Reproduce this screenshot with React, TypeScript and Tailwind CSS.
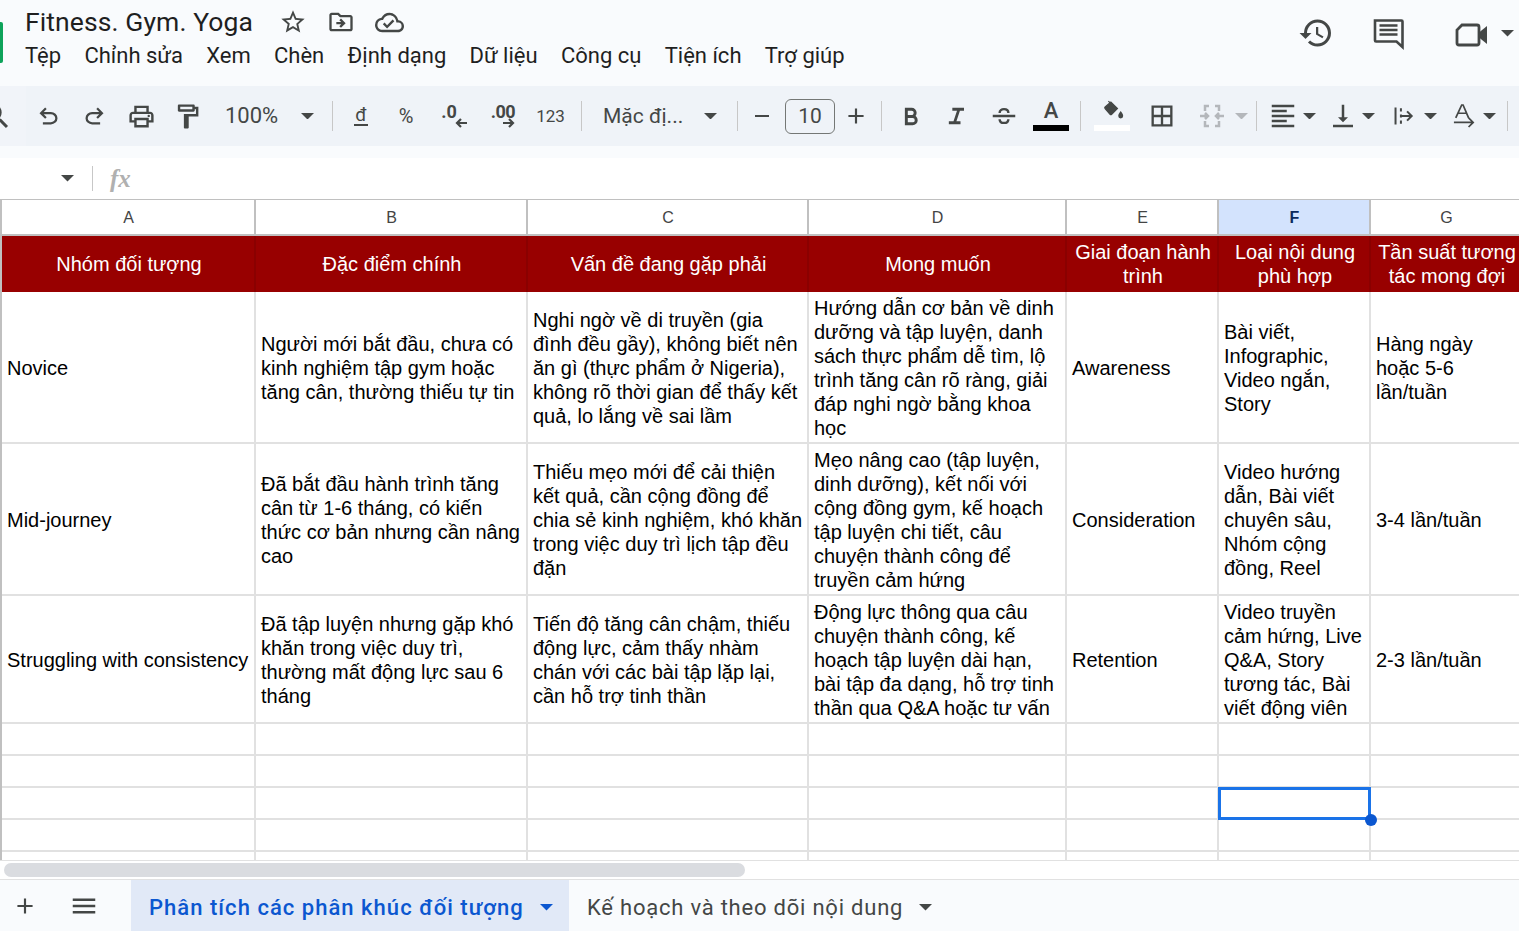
import React from "react";
import {
  MdOutlinePrint, MdOutlineFormatPaint, MdStarBorder, MdOutlineDriveFileMove, MdOutlineCloudDone,
  MdHistory, MdBorderAll, MdFormatAlignLeft,
  MdVerticalAlignBottom, MdSearch, MdAdd, MdRemove, MdMenu,
} from "react-icons/md";

const ic = "#444746";

function Caret({ w = 13, color = "#444746" }: { w?: number; color?: string }) {
  return (
    <svg width={w} height={w / 2} viewBox="0 0 14 7" className="shrink-0"><path d="M0 0h14L7 7z" fill={color} /></svg>
  );
}
function Slot({ w, ml = 0, children }: { w: number; ml?: number; children?: React.ReactNode }) {
  return <div className="flex shrink-0 items-center justify-center" style={{ width: w, marginLeft: ml }}>{children}</div>;
}
function Sep({ ml = 0 }: { ml?: number }) {
  return <div className="h-[30px] w-px shrink-0 bg-[#c7c7c7]" style={{ marginLeft: ml }} />;
}

const menus = ["Tệp", "Chỉnh sửa", "Xem", "Chèn", "Định dạng", "Dữ liệu", "Công cụ", "Tiện ích", "Trợ giúp"];

const cols = ["A", "B", "C", "D", "E", "F", "G"];
const head = ["Nhóm đối tượng", "Đặc điểm chính", "Vấn đề đang gặp phải", "Mong muốn", "Giai đoạn hành\ntrình", "Loại nội dung\nphù hợp", "Tần suất tương\ntác mong đợi"];
const rows = [
  { h: "h-[152px]", c: ["Novice", "Người mới bắt đầu, chưa có\nkinh nghiệm tập gym hoặc\ntăng cân, thường thiếu tự tin", "Nghi ngờ về di truyền (gia\nđình đều gầy), không biết nên\năn gì (thực phẩm ở Nigeria),\nkhông rõ thời gian để thấy kết\nquả, lo lắng về sai lầm", "Hướng dẫn cơ bản về dinh\ndưỡng và tập luyện, danh\nsách thực phẩm dễ tìm, lộ\ntrình tăng cân rõ ràng, giải\nđáp nghi ngờ bằng khoa\nhọc", "Awareness", "Bài viết,\nInfographic,\nVideo ngắn,\nStory", "Hàng ngày\nhoặc 5-6\nlần/tuần"] },
  { h: "h-[152px]", c: ["Mid-journey", "Đã bắt đầu hành trình tăng\ncân từ 1-6 tháng, có kiến\nthức cơ bản nhưng cần nâng\ncao", "Thiếu mẹo mới để cải thiện\nkết quả, cần cộng đồng để\nchia sẻ kinh nghiệm, khó khăn\ntrong việc duy trì lịch tập đều\nđặn", "Mẹo nâng cao (tập luyện,\ndinh dưỡng), kết nối với\ncộng đồng gym, kế hoạch\ntập luyện chi tiết, câu\nchuyện thành công để\ntruyền cảm hứng", "Consideration", "Video hướng\ndẫn, Bài viết\nchuyên sâu,\nNhóm cộng\nđồng, Reel", "3-4 lần/tuần"] },
  { h: "h-[128px]", c: ["Struggling with consistency", "Đã tập luyện nhưng gặp khó\nkhăn trong việc duy trì,\nthường mất động lực sau 6\ntháng", "Tiến độ tăng cân chậm, thiếu\nđộng lực, cảm thấy nhàm\nchán với các bài tập lặp lại,\ncần hỗ trợ tinh thần", "Động lực thông qua câu\nchuyện thành công, kế\nhoạch tập luyện dài hạn,\nbài tập đa dạng, hỗ trợ tinh\nthần qua Q&A hoặc tư vấn", "Retention", "Video truyền\ncảm hứng, Live\nQ&A, Story\ntương tác, Bài\nviết động viên", "2-3 lần/tuần"] },
];
const gridCols = "grid grid-cols-[254px_272px_281px_258px_152px_152px_152px] w-[1521px]";

export default function App() {
  return (
    <div className="relative flex h-[931px] w-[1519px] flex-col overflow-hidden bg-white font-['Liberation_Sans',sans-serif]">
      {/* Title + menu */}
      <div className="flex h-[86px] shrink-0 bg-[#f9fbfd]">
        <div className="mt-[22px] h-[41px] w-[3px] shrink-0 rounded-r-[2px] bg-[#0ea35a]" />
        <div className="ml-[22px] flex-1 font-['Roboto',sans-serif]">
          <div className="mt-[4px] flex h-[36px] items-center">
            <span className="text-[26.500px] leading-[34px] tracking-[0.1px] text-[#1f1f1f]">Fitness. Gym. Yoga</span>
            <MdStarBorder size={28} color={ic} className="ml-[26px]" />
            <MdOutlineDriveFileMove size={28} color={ic} className="ml-[20px]" />
            <MdOutlineCloudDone size={29} color={ic} className="ml-[20px]" />
          </div>
          <div className="mt-[2px] flex gap-[23.3px] text-[22px] leading-[28px] text-[#1f1f1f]">
            {menus.map((m) => <span key={m} className="whitespace-nowrap">{m}</span>)}
          </div>
        </div>
        <div className="flex items-start pt-[15px] pr-[5px]">
          <MdHistory size={36} color={ic} />
          <svg width="36" height="36" viewBox="0 0 36 36" className="ml-[37px]"><path d="M4 5.500h26.500a1 1 0 0 1 1 1V32l-6-5.500H5a1 1 0 0 1-1-1z" fill="none" stroke={ic} strokeWidth="2.600" /><path d="M8.500 10.500h18M8.500 15h18M8.500 19.500h18" stroke={ic} strokeWidth="2.600" /></svg>
          <svg width="34" height="26" viewBox="0 0 34 26" className="ml-[48px] mt-[7px]"><path d="M7 3h15a2 2 0 0 1 2 2v16a2 2 0 0 1-2 2H4a2 2 0 0 1-2-2V8z" fill="none" stroke={ic} strokeWidth="2.800" /><path d="M24 10.500 32 4v18l-8-6.500z" fill={ic} /></svg>
          <div className="ml-[12px] mt-[15px]"><Caret /></div>
        </div>
      </div>

      {/* Toolbar */}
      <div className="flex h-[60px] shrink-0 items-center bg-[#eff3f8] font-['Roboto',sans-serif] text-[#444746]">
        <div className="flex h-full w-[26px] shrink-0 items-center overflow-hidden bg-[#f1f4f9]"><MdSearch size={34} color={ic} className="-ml-[21px] shrink-0" /></div>
        <Slot w={44}><svg width="27" height="27" viewBox="0 0 24 24" fill={ic}><path d="M7 19v-2h7.100q1.575 0 2.738-1T18 13.500T16.838 11T14.100 10H7.800l2.600 2.600L9 14 4 9l5-5 1.400 1.400L7.800 8h6.300q2.425 0 4.163 1.575T20 13.500t-1.737 3.925T14.100 19z" /></svg></Slot>
        <Slot w={49}><svg width="27" height="27" viewBox="0 0 24 24" fill={ic}><path d="M9.900 19q-2.425 0-4.163-1.575T4 13.500t1.737-3.925T9.900 8h6.300l-2.600-2.600L15 4l5 5-5 5-1.400-1.400 2.600-2.600H9.900q-1.575 0-2.738 1T6 13.500T7.163 16T9.900 17H17v2z" /></svg></Slot>
        <Slot w={45}><MdOutlinePrint size={29} color={ic} /></Slot>
        <Slot w={47}><MdOutlineFormatPaint size={29} color={ic} /></Slot>
        <span className="ml-[14px] w-[69px] text-[22px] leading-none">100%</span>
        <Slot w={26}><Caret /></Slot>
        <Sep ml={12} />
        <Slot w={56}><span className="border-b-[2px] border-[#444746] px-px text-[19px] leading-[18px]">đ</span></Slot>
        <Slot w={34}><span className="text-[20px] leading-none">%</span></Slot>
        <Slot w={62}>
          <span className="flex items-start">
            <span className="text-[18px] font-bold leading-none">.0</span>
            <svg width="12" height="12" viewBox="0 0 12 12" className="-ml-[2px] mt-[14px]"><path d="M12 6H2M6 2 2 6l4 4" fill="none" stroke={ic} strokeWidth="2.200" /></svg>
          </span>
        </Slot>
        <Slot w={36}>
          <span className="flex items-start">
            <span className="text-[18px] font-bold leading-none tracking-[-0.5px]">.00</span>
            <svg width="12" height="12" viewBox="0 0 12 12" className="-ml-[12px] mt-[14px]"><path d="M0 6h10M6 2l4 4-4 4" fill="none" stroke={ic} strokeWidth="2.200" /></svg>
          </span>
        </Slot>
        <Slot w={59}><span className="text-[17px] leading-none">123</span></Slot>
        <Sep ml={1} />
        <span className="ml-[21px] w-[94px] whitespace-nowrap text-[21px] leading-none">Mặc đị...</span>
        <Slot w={26}><Caret /></Slot>
        <Sep ml={14} />
        <Slot w={47}><MdRemove size={24} color={ic} /></Slot>
        <div className="flex h-[35px] w-[50px] shrink-0 items-center justify-center rounded-[6px] border border-[#747775] text-[21px] leading-none">10</div>
        <Slot w={42}><MdAdd size={26} color={ic} /></Slot>
        <Sep ml={4} />
        <Slot w={56}><svg width="25" height="25" viewBox="0 0 24 24" fill="none" stroke={ic} strokeWidth="2.800"><path d="M8 5h5a3.500 3.500 0 0 1 0 7H8zM8 12h6a3.500 3.500 0 0 1 0 7H8z" /></svg></Slot>
        <Slot w={37}><svg width="28" height="28" viewBox="0 0 24 24" fill={ic}><path d="M5 19v-2.500h4l3-9H8V5h10v2.500h-3.500l-3 9H15V19z" /></svg></Slot>
        <Slot w={58}><svg width="30" height="30" viewBox="0 0 24 24" fill="none" stroke={ic} strokeWidth="1.900"><path d="M3 12h18M15.500 9.500c0-2-1.500-3-3.500-3s-3.500 1-3.500 3M8.500 14.500c0 2 1.500 3 3.500 3s3.500-1 3.500-3" /></svg></Slot>
        <div className="-mt-[2px] flex w-[36px] shrink-0 flex-col items-center">
          <span className="text-[22px] font-medium leading-[24px]">A</span>
          <div className="mt-[2px] h-[6px] w-[36px] bg-black" />
        </div>
        <Sep ml={11} />
        <div className="-mt-[2px] ml-[13px] flex w-[36px] shrink-0 flex-col items-center">
          <svg width="23" height="24" viewBox="0 0 28 26"><path d="M9 1l1.500 1.500M5 8l7-6 8 8-7 7a1.500 1.500 0 0 1-2 0l-6-7a1.500 1.500 0 0 1 0-2z" fill={ic} stroke={ic} strokeWidth="1.500" /><path d="M24 13c2 3 3 4 3 6a3 3 0 0 1-6 0c0-2 1-3 3-6z" fill={ic} /></svg>
          <div className="mt-[2px] h-[6px] w-[36px] bg-white" />
        </div>
        <Slot w={64}><MdBorderAll size={28} color={ic} /></Slot>
        <Slot w={32} ml={2}>
          <svg width="26" height="24" viewBox="0 0 26 24" fill="none" stroke="#b4b7bb" strokeWidth="2.500"><path d="M6 7V2h4M16 2h4v5M6 17v5h4M16 22h4v-5M1 12h8M6 9l3 3-3 3M25 12h-8M20 9l-3 3 3 3" /></svg>
        </Slot>
        <Slot w={26}><Caret color="#b4b7bb" /></Slot>
        <Sep ml={2} />
        <Slot w={40} ml={6}><MdFormatAlignLeft size={30} color={ic} /></Slot>
        <Caret />
        <Slot w={38} ml={8}><MdVerticalAlignBottom size={30} color={ic} /></Slot>
        <Caret />
        <Slot w={38} ml={10}>
          <svg width="20" height="20" viewBox="0 0 26 24" fill="none" stroke={ic} strokeWidth="2.600"><path d="M2 1v22M9 2v4M9 10v4M9 18v4M9 12h14M17 6l6 6-6 6" /></svg>
        </Slot>
        <div className="ml-[1px]"><Caret /></div>
        <Slot w={38} ml={8}>
          <svg width="22" height="24" viewBox="0 0 24 26" fill="none" stroke={ic} strokeWidth="1.900"><path d="M3 15 9.500 1h1.500l6 14M5.500 10h10M1 20h20M17 15l5 5-5 5" /></svg>
        </Slot>
        <Caret />
        <Sep ml={11} />
      </div>

      {/* Strip + formula bar */}
      <div className="h-[12px] shrink-0 bg-[#f9fbfd]" />
      <div className="flex h-[42px] shrink-0 items-center border-b border-[#c0c0c0] bg-white">
        <div className="ml-[61px]"><Caret /></div>
        <div className="ml-[18px] h-[25px] w-px bg-[#c7c7c7]" />
        <span className="ml-[17px] font-['Liberation_Serif',serif] text-[25px] font-bold italic leading-none text-[#b0b0b0]">fx</span>
      </div>

      {/* Sheet */}
      <div className="relative h-[660px] shrink-0 overflow-hidden border-l-2 border-[#c0c0c0]">
        <div className={`${gridCols} h-[36px] border-b-2 border-[#c0c0c0]`}>
          {cols.map((c) => (
            <div key={c} className={`flex items-center justify-center border-r-2 border-[#c0c0c0] pt-[2px] pl-[1px] text-[16px] ${c === "F" ? "bg-[#d3e3fd] font-bold text-[#0b2a5c]" : "text-[#444]"}`}>{c}</div>
          ))}
        </div>
        <div className={`${gridCols} h-[56px] bg-[#980000]`}>
          {head.map((t, i) => (
            <div key={i} className="flex items-center justify-center whitespace-pre border-r-2 border-[#8a0000] pl-[2px] text-center text-[20px] leading-[24px] text-white">{t}</div>
          ))}
        </div>
        {rows.map((r, i) => (
          <div key={i} className={`${gridCols} ${r.h}`}>
            {r.c.map((t, j) => (
              <div key={j} className="flex items-center overflow-hidden whitespace-pre border-r-2 border-b-2 border-[#e1e1e1] pt-[2px] pl-[5px] text-[20px] leading-[24px] text-black">{t}</div>
            ))}
          </div>
        ))}
        {["h-[32px]", "h-[32px]", "h-[32px]", "h-[32px]", "h-[8px]"].map((h, i) => (
          <div key={i} className={`${gridCols} ${h}`}>
            {cols.map((c) => <div key={c} className={`border-r-2 border-[#e1e1e1] ${i < 4 ? "border-b-2" : ""}`} />)}
          </div>
        ))}
        {/* selection overlay */}
        <div className="absolute left-[1216px] top-[587px] h-[33px] w-[153px] border-[3px] border-[#1a73e8]" />
        <div className="absolute left-[1363px] top-[614px] size-[12px] rounded-full bg-[#0b57d0]" />
      </div>

      {/* Scrollbar */}
      <div className="flex h-[20px] shrink-0 items-center border-t border-b border-[#e1e1e1] bg-white pl-[4px]">
        <div className="h-[14px] w-[741px] rounded-[7px] bg-[#dadce0]" />
      </div>

      {/* Tabs */}
      <div className="flex min-h-0 flex-1 bg-[#f9fbfd] font-['Roboto',sans-serif]">
        <Slot w={50}><MdAdd size={26} color={ic} /></Slot>
        <Slot w={68}><MdMenu size={30} color={ic} /></Slot>
        <div className="ml-[13px] flex w-[438px] items-center bg-[#e1e9f7] pt-[4px] pl-[18px]">
          <span className="whitespace-nowrap text-[22px] font-medium tracking-[1.03px] text-[#0b57d0]">Phân tích các phân khúc đối tượng</span>
          <div className="ml-[16px]"><Caret color="#0b57d0" /></div>
        </div>
        <div className="flex items-center pt-[4px] pl-[18px]">
          <span className="whitespace-nowrap text-[22px] tracking-[0.78px] text-[#444746]">Kế hoạch và theo dõi nội dung</span>
          <div className="ml-[16px]"><Caret /></div>
        </div>
      </div>
    </div>
  );
}
